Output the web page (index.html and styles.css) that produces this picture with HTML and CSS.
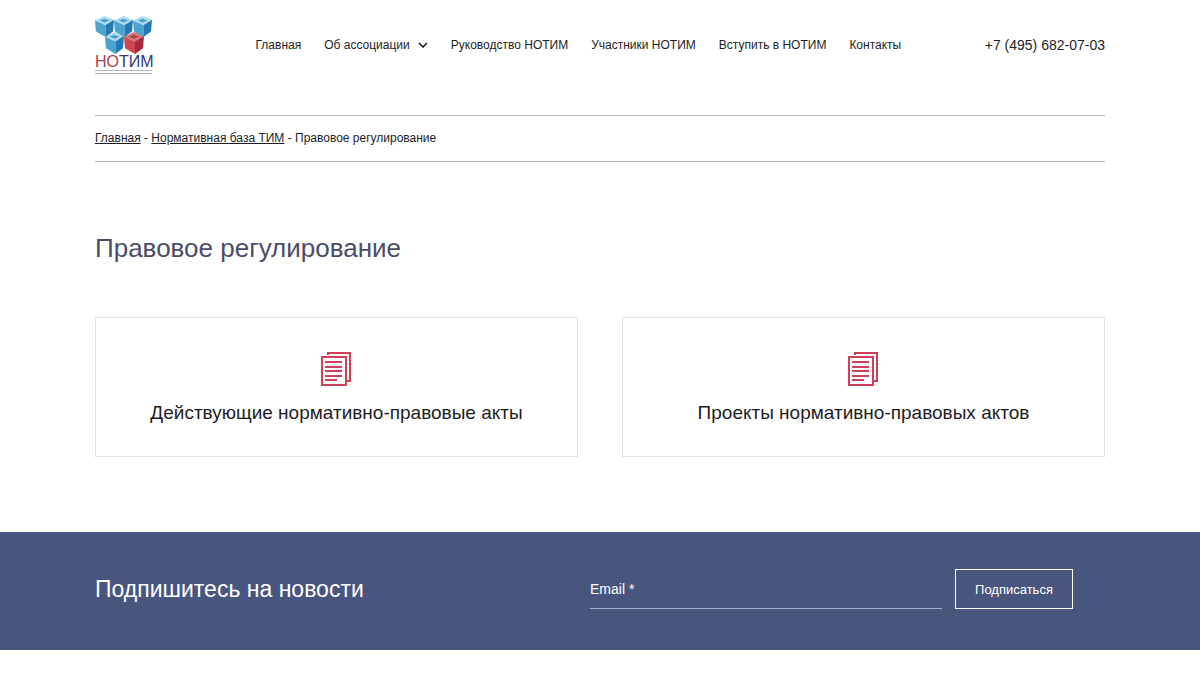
FILE: index.html
```html
<!DOCTYPE html>
<html lang="ru">
<head>
<meta charset="utf-8">
<meta name="viewport" content="width=device-width, initial-scale=1">
<title>Правовое регулирование</title>
<link rel="stylesheet" href="styles.css">
</head>
<body>
<svg class="sprite" aria-hidden="true">
  <symbol id="cube-blue" viewBox="0 0 20 23" preserveAspectRatio="none">
    <path fill="#a9dcec" d="M0 5 10 0l10 4-9 6z"/>
    <path fill="#4ba3cf" d="M0 5l11 5v13L1 17z"/>
    <path fill="#2479b4" d="M11 10l9-6-1 13-8 6z"/>
    <path fill="#4f9fc6" d="M5 5l5-2 5 2-5 2z"/>
  </symbol>
  <symbol id="cube-red" viewBox="0 0 20 23" preserveAspectRatio="none">
    <path fill="#d9737c" d="M0 5 10 0l10 4-9 6z"/>
    <path fill="#cf4550" d="M0 5l11 5v13L1 17z"/>
    <path fill="#a52a3b" d="M11 10l9-6-1 13-8 6z"/>
    <path fill="#b63d4b" d="M5 5l5-2 5 2-5 2z"/>
  </symbol>
  <symbol id="docs" viewBox="0 0 32 36">
    <g fill="none" stroke="#d0405a" stroke-width="2">
      <path d="M7 4V2h22v28h-3"/>
      <path d="M1 6h24v28H1z"/>
      <path d="M4 11h17M4 16h17M4 20h17M4 25h17M4 29h12"/>
    </g>
  </symbol>
</svg>
<header class="container header">
  <a class="logo" href="#" aria-label="НОТИМ">
    <svg class="logo-cubes" viewBox="0 0 57 38" aria-hidden="true">
      <use href="#cube-blue" x="10" y="16" width="19" height="22"/>
      <use href="#cube-red" x="29" y="16" width="20" height="22"/>
      <use href="#cube-blue" x="0" y="0" width="19" height="21"/>
      <use href="#cube-blue" x="19" y="0" width="19" height="21"/>
      <use href="#cube-blue" x="38" y="0" width="19" height="21"/>
    </svg>
    <span class="logo-name"><span class="logo-red">НО</span>ТИМ</span>
    <span class="logo-rule"></span>
  </a>
  <nav class="nav">
    <a href="#">Главная</a>
    <a class="nav-more" href="#">Об ассоциации
      <svg class="chevron" viewBox="0 0 10 6" aria-hidden="true"><path d="M1 1l4 4 4-4" fill="none" stroke="currentColor" stroke-width="1.6"/></svg>
    </a>
    <a href="#">Руководство НОТИМ</a>
    <a href="#">Участники НОТИМ</a>
    <a href="#">Вступить в НОТИМ</a>
    <a href="#">Контакты</a>
  </nav>
  <a class="phone" href="tel:+74956820703">+7 (495) 682-07-03</a>
</header>
<main class="container">
  <nav class="breadcrumbs"><a href="#">Главная</a> - <a href="#">Нормативная база ТИМ</a> - Правовое регулирование</nav>
  <h1 class="title">Правовое регулирование</h1>
  <div class="cards">
    <a class="card" href="#"><svg class="card-icon" aria-hidden="true"><use href="#docs"/></svg>Действующие нормативно-правовые акты</a>
    <a class="card" href="#"><svg class="card-icon" aria-hidden="true"><use href="#docs"/></svg>Проекты нормативно-правовых актов</a>
  </div>
</main>
<section class="subscribe">
  <div class="container subscribe-row">
    <h2 class="subscribe-title">Подпишитесь на новости</h2>
    <form class="form">
      <input class="email" type="email" placeholder="Email *" aria-label="Email" required>
      <button class="submit" type="submit">Подписаться</button>
    </form>
  </div>
</section>
</body>
</html>
```
FILE: styles.css
```css
* { box-sizing: border-box; }
body {
  margin: 0;
  background: #fff;
  color: #1d1d1f;
  font-family: "Liberation Sans", Arial, sans-serif;
  font-size: 12px;
}
a { color: inherit; text-decoration: none; }
h1, h2 { margin: 0; font-weight: 400; }
.sprite { position: absolute; width: 0; height: 0; }
.container { max-width: 1010px; margin: 0 auto; }
.header {
  display: flex;
  align-items: center;
  justify-content: space-between;
  height: 89px;
}
.logo { display: flex; flex-direction: column; width: 57px; }
.logo-cubes { width: 57px; height: 38px; }
.logo-name {
  color: #2c3a78;
  font-size: 16px;
  line-height: 15px;
}
.logo-red { color: #a8404c; }
.logo-rule { height: 4px; margin-top: 1px; border: solid #b4b4ba; border-width: 1px 0; }
.nav { display: flex; gap: 23px; margin-left: 20px; }
.nav-more { display: flex; align-items: center; gap: 8px; }
.chevron { width: 10px; height: 6px; }
.phone { font-size: 14px; }
.breadcrumbs {
  margin-top: 26px;
  padding: 15px 0;
  border: solid #b7b7b7;
  border-width: 1px 0;
  line-height: 15px;
}
.breadcrumbs a { text-decoration: underline; }
.title {
  margin-top: 70px;
  color: #4b4d66;
  font-size: 26px;
  line-height: 32px;
}
.cards {
  display: grid;
  grid-template-columns: 1fr 1fr;
  gap: 44px;
  margin-top: 53px;
}
.card {
  display: flex;
  flex-direction: column;
  align-items: center;
  gap: 14px;
  padding: 33px 20px 31px;
  border: 1px solid #e2e2e2;
  font-size: 19px;
  line-height: 24px;
}
.card-icon { width: 32px; height: 36px; }
.subscribe { margin-top: 75px; padding: 37px 0 41px; background: #48557f; color: #fff; }
.subscribe-row { display: grid; grid-template-columns: 495px 1fr; align-items: center; }
.subscribe-title { font-size: 23px; line-height: 28px; }
.form { display: flex; gap: 13px; padding-right: 32px; }
.email {
  flex: 1;
  min-width: 0;
  padding: 0;
  border: 0;
  border-bottom: 1px solid #a3aecb;
  border-radius: 0;
  background: none;
  color: #fff;
  font: 14px "Liberation Sans", Arial, sans-serif;
}
.email::placeholder { color: #fff; opacity: 1; }
.submit {
  width: 118px;
  height: 40px;
  padding: 0;
  border: 1px solid #fff;
  background: none;
  color: #fff;
  font: 13px "Liberation Sans", Arial, sans-serif;
}
```
